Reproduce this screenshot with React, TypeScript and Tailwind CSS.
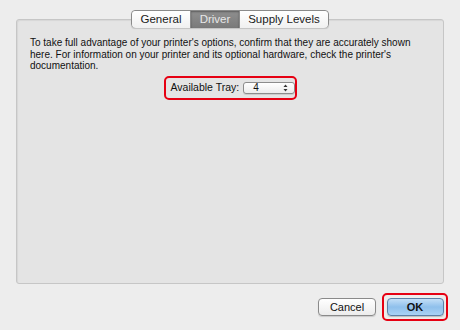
import React from "react";

const font = { fontFamily: '"Liberation Sans", Arial, sans-serif' };

function Tab({ label, active, first, last }: { label: string; active?: boolean; first?: boolean; last?: boolean }) {
  return (
    <div
      className={
        "flex h-full items-center justify-center text-[11.5px] " +
        (active
          ? "bg-gradient-to-b from-[#8f8f8f] to-[#7a7a7a] text-[#e8e8e8] shadow-[inset_0_1px_2px_rgba(0,0,0,0.35)]"
          : "bg-gradient-to-b from-white to-[#f0f0f0] text-[#1a1a1a]") +
        (first ? " rounded-l-[4px]" : "") +
        (last ? " rounded-r-[4px]" : "") +
        (!last ? " border-r border-[#8a8a8a]" : "")
      }
    >
      {label}
    </div>
  );
}

export default function App() {
  return (
    <div className="h-[330px] w-[460px] bg-[#ededed] px-[16px] pt-[10px]" style={font}>
      <div className="relative z-10 flex justify-center">
        <div className="grid h-[18px] w-[198px] grid-cols-[59px_49px_1fr] rounded-[4px] border border-[#8a8a8a] shadow-[0_1px_1px_rgba(0,0,0,0.15)]">
          <Tab label="General" first />
          <Tab label="Driver" active />
          <Tab label="Supply Levels" last />
        </div>
      </div>

      <div className="-mt-[9px] h-[265px] rounded-[3px] border border-[#c6c6c6] bg-[#e4e4e4] px-[13px] pt-[17px] shadow-[inset_1px_1px_1px_rgba(0,0,0,0.06)]">
        <p className="max-w-[388px] text-[10px] leading-[11.5px] text-[#111]">
          To take full advantage of your printer's options, confirm that they are accurately shown here. For
          information on your printer and its optional hardware, check the printer's documentation.
        </p>

        <div className="mt-[4px] flex justify-center">
          <div className="flex h-[24px] w-[133px] items-center gap-[4px] rounded-[5px] border-2 border-[#e60012] pl-[5px]">
            <span className="shrink-0 whitespace-nowrap text-[10.5px] text-[#111]">Available Tray:</span>
            <div className="flex h-[12px] w-[52px] shrink-0 items-center justify-between rounded-[3px] border border-[#8c8c8c] bg-gradient-to-b from-white to-[#ececec] pl-[9px] pr-[6px] shadow-[0_1px_0_rgba(0,0,0,0.1)]">
              <span className="text-[10px] leading-none text-[#111]">4</span>
              <svg width="5" height="8" viewBox="0 0 5 8">
                <path d="M2.5 0.5 L4.5 3 H0.5 Z" fill="#333" />
                <path d="M2.5 7.5 L4.5 5 H0.5 Z" fill="#333" />
              </svg>
            </div>
          </div>
        </div>
      </div>

      <div className="mt-[9px] flex items-center justify-end gap-[6px] pr-0">
        <button className="h-[18px] w-[58px] rounded-[4px] border border-[#8a8a8a] bg-gradient-to-b from-white to-[#ececec] text-[11px] text-[#111] shadow-[0_1px_1px_rgba(0,0,0,0.15)]">
          Cancel
        </button>
        <div className="-mr-[4px] flex h-[28px] w-[66px] items-center justify-center rounded-[5px] border-2 border-[#e60012]">
          <button className="h-[18px] w-[57px] rounded-[4px] border border-[#5c7fa6] bg-gradient-to-b from-[#c3dff7] via-[#8fc0ec] to-[#a9d2f5] text-[11px] font-bold text-[#111] shadow-[0_1px_1px_rgba(0,0,0,0.2)]">
            OK
          </button>
        </div>
      </div>
    </div>
  );
}
